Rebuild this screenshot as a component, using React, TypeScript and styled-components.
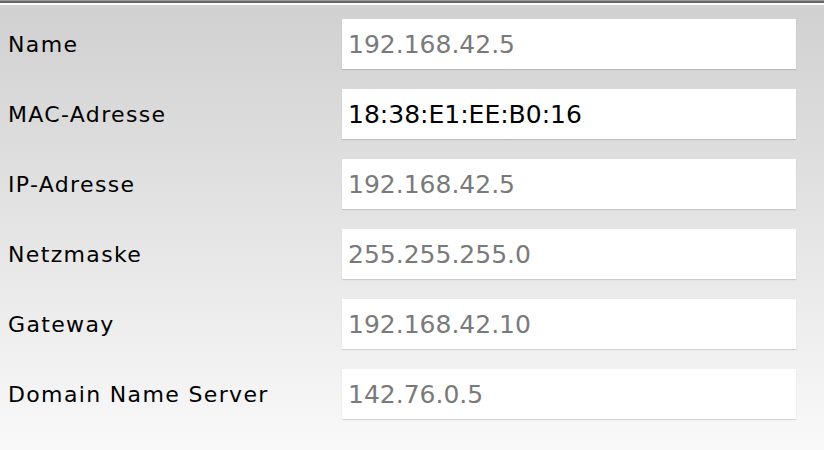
import React from "react";
import styled, { createGlobalStyle } from "styled-components";

const Global = createGlobalStyle`
  html, body { margin: 0; padding: 0; }
  body { width: 824px; height: 450px; overflow: hidden; }
`;

const Page = styled.div`
  width: 824px;
  height: 450px;
  box-sizing: border-box;
  display: flex;
  flex-direction: column;
  background: linear-gradient(to bottom, #d0d0d0 0%, #e4e4e4 50%, #f9f9f9 100%);
  font-family: "DejaVu Sans", "Liberation Sans", sans-serif;
`;

const TopRule = styled.div`
  height: 2px;
  border-top: 1px solid #9a9a9a;
  border-bottom: 2px solid #fdfdfd;
  background: #666;
`;

const Form = styled.div`
  display: grid;
  grid-template-columns: 342px 454px;
  grid-auto-rows: 50px;
  row-gap: 20px;
  padding-top: 14px;
`;

const Label = styled.div`
  display: flex;
  align-items: center;
  padding-left: 8px;
  padding-top: 1px;
  font-size: 22px;
  letter-spacing: 1.35px;
  color: #000;
  white-space: nowrap;
`;

const Field = styled.div<{ $active?: boolean }>`
  display: flex;
  align-items: center;
  background: #fff;
  box-shadow: 0 1px 1px rgba(0, 0, 0, 0.12);
  padding-left: 6px;
  font-size: 25px;
  color: ${(p) => (p.$active ? "#000" : "#7a7a7a")};
`;

const rows: { label: string; value: string; active?: boolean }[] = [
  { label: "Name", value: "192.168.42.5" },
  { label: "MAC-Adresse", value: "18:38:E1:EE:B0:16", active: true },
  { label: "IP-Adresse", value: "192.168.42.5" },
  { label: "Netzmaske", value: "255.255.255.0" },
  { label: "Gateway", value: "192.168.42.10" },
  { label: "Domain Name Server", value: "142.76.0.5" },
];

export default function App() {
  return (
    <>
      <Global />
      <Page>
        <TopRule />
        <Form>
          {rows.map((r) => (
            <React.Fragment key={r.label}>
              <Label>{r.label}</Label>
              <Field $active={r.active}>{r.value}</Field>
            </React.Fragment>
          ))}
        </Form>
      </Page>
    </>
  );
}
